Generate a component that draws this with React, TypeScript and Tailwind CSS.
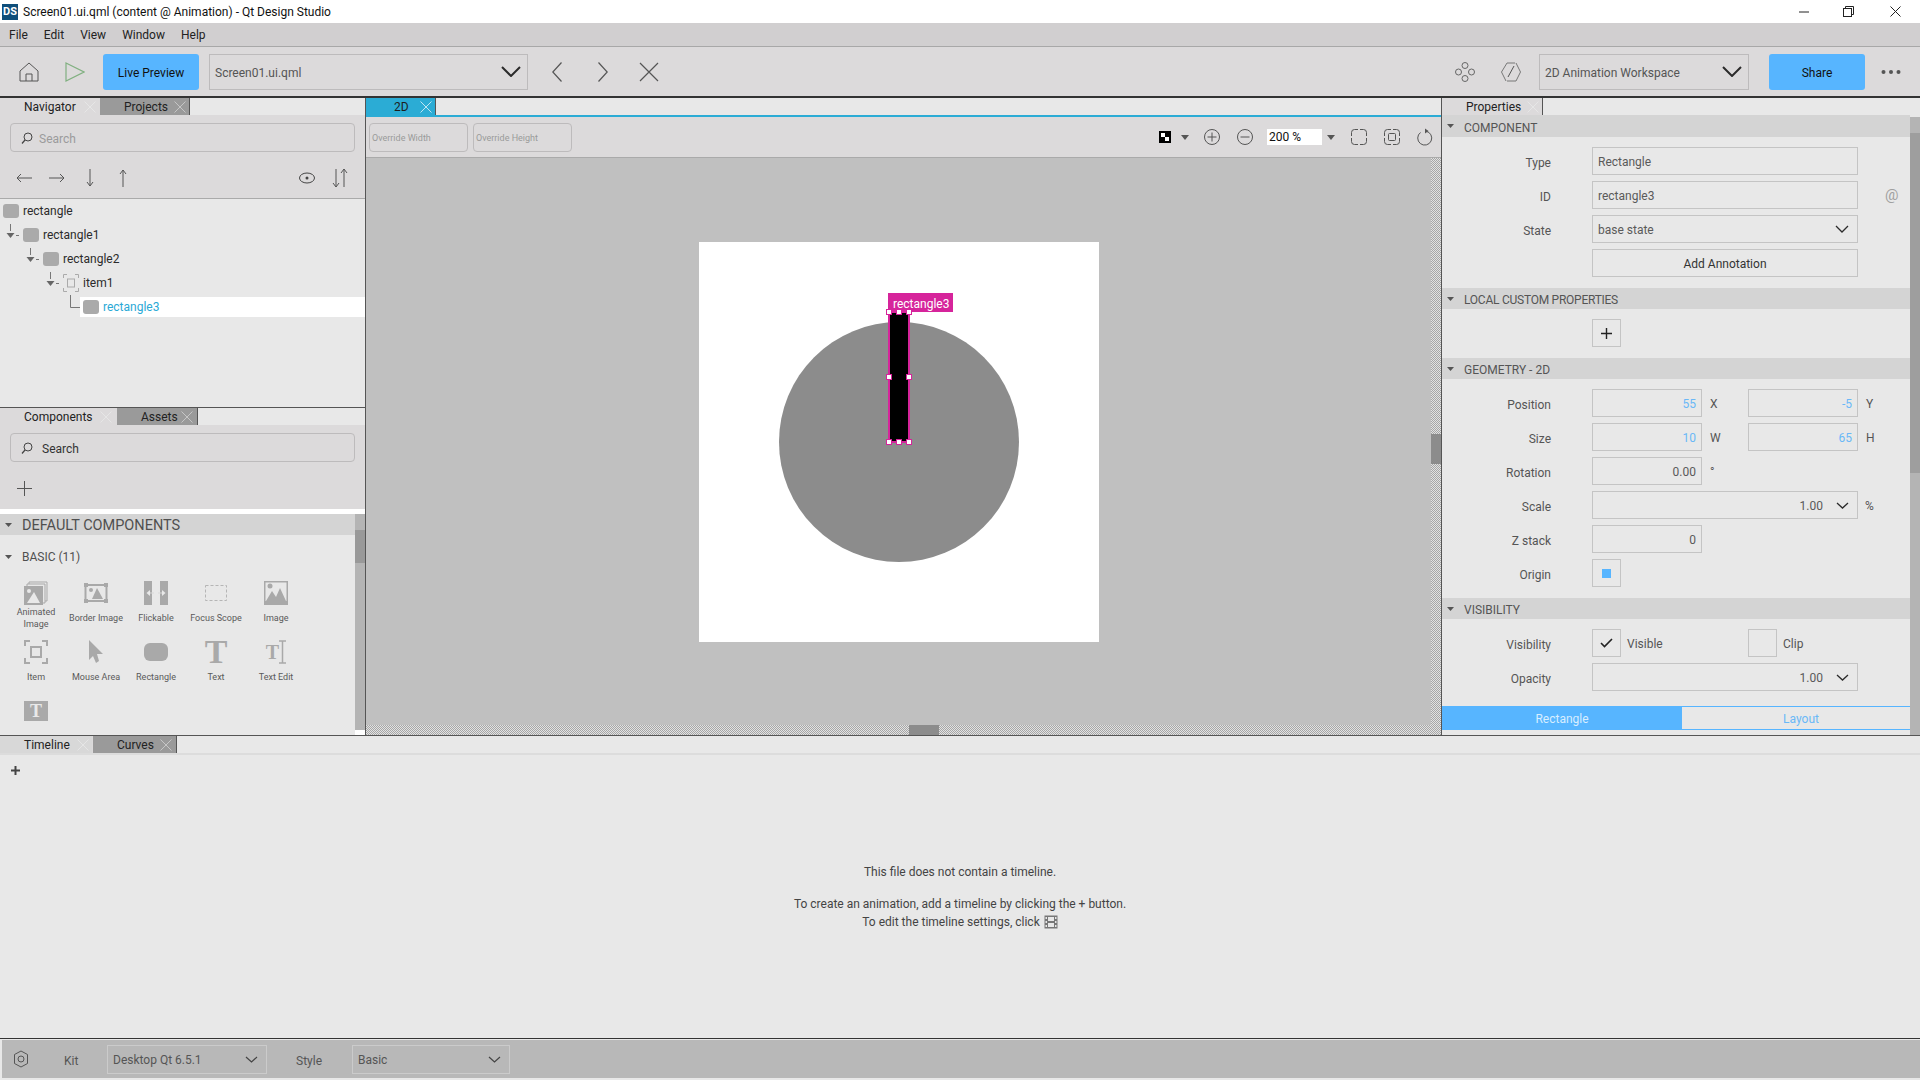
import React from "react";

const S = (p: React.SVGProps<SVGSVGElement> & { w: number; h: number }) => {
  const { w, h, children, ...rest } = p;
  return (
    <svg width={w} height={h} viewBox={`0 0 ${w} ${h}`} fill="none" className="shrink-0 block" {...rest}>
      {children}
    </svg>
  );
};

const TabX = ({ color = "#c9c9c9" }: { color?: string }) => (
  <S w={12} h={12}>
    <path d="M0.5 0.5L11.5 11.5M11.5 0.5L0.5 11.5" stroke={color} strokeWidth="0.8" />
  </S>
);

function Tab({ label, w, pl, xAt, active, bg }: { label: string; w: number; pl: number; xAt: number; active?: boolean; bg?: string }) {
  return (
    <div
      className={`relative h-full flex items-center shrink-0 text-[12px] text-[#222] border-r ${active ? "border-[#dcdadb]" : "border-[#555]"}`}
      style={{ width: w, paddingLeft: pl, background: bg ?? (active ? "#dcdadb" : "#9a9a9a") }}
    >
      <span>{label}</span>
      <span className="absolute top-[3px]" style={{ left: xAt - 6 }}>
        <TabX color={active ? "#e9e9e9" : "#d2d2d2"} />
      </span>
    </div>
  );
}

const SearchBox = ({ color, gap }: { color: string; gap: number }) => (
  <div className="mx-[10px] mt-[8px] h-[29px] rounded-[4px] border border-[#bdbbbc] flex items-center pl-[10px] text-[12px]" style={{ color }}>
    <S w={12} h={12}>
      <circle cx="7" cy="5" r="4" stroke="#444" strokeWidth="1" />
      <path d="M4 8L1 11.5" stroke="#444" strokeWidth="1.2" />
    </S>
    <span className="pt-[2px]" style={{ marginLeft: gap }}>Search</span>
  </div>
);

const Chevron = ({ w = 20, sw = 2, color = "#2b2b2b" }: { w?: number; sw?: number; color?: string }) => (
  <S w={w} h={Math.round(w * 0.55)}>
    <path d={`M1 1L${w / 2} ${Math.round(w * 0.55) - 1}L${w - 1} 1`} stroke={color} strokeWidth={sw} />
  </S>
);

const Caret = ({ color = "#555", w = 7, h = 4 }: { color?: string; w?: number; h?: number }) => (
  <S w={w} h={h}>
    <path d={`M0 0H${w}L${w / 2} ${h}Z`} fill={color} />
  </S>
);

function TreeConnector({ last }: { last?: boolean }) {
  return last ? (
    <S w={17} h={24}>
      <path d="M7.5 0V12.5H17" stroke="#777" strokeWidth="1" />
    </S>
  ) : (
    <S w={20} h={24}>
      <path d="M7.5 1V8" stroke="#777" strokeWidth="1" />
      <path d="M3.5 10H11.5L7.5 15Z" fill="#666" />
      <path d="M13 12.5H16" stroke="#777" strokeWidth="1" />
    </S>
  );
}

const RectIcon = () => <div className="w-[16px] h-[14px] rounded-[3px] bg-[#aaaaaa] shrink-0" />;
const ItemIcon = () => (
  <S w={16} h={18}>
    <path d="M0.5 4V0.5H4M12 0.5H15.5V4M15.5 14V17.5H12M4 17.5H0.5V14" stroke="#aaa" />
    <rect x="4.5" y="5" width="7" height="8" stroke="#aaa" />
  </S>
);

function TreeRow({ indent, label, item }: { indent: number; label: string; item?: boolean }) {
  return (
    <div className="h-[24px] flex items-center text-[12px] text-[#2b2b2b]" style={{ paddingLeft: indent + 3 }}>
      {indent >= 0 && label !== "rectangle" && <TreeConnector />}
      {item ? <ItemIcon /> : <RectIcon />}
      <span className="ml-[4px]">{label}</span>
    </div>
  );
}

const G = "#a9a9a9";
const compIcons: Record<string, React.ReactNode> = {
  anim: (
    <S w={24} h={24}>
      <path d="M5 3V1H23V20H21" stroke={G} strokeWidth="1" />
      <path d="M3 5V3H21V22H19" stroke={G} strokeWidth="1" />
      <rect x="0" y="5" width="19" height="19" fill={G} />
      <path d="M3 22L10 11L16 22Z" fill="#e9e9e9" />
      <circle cx="5" cy="10" r="2" fill="#e9e9e9" />
    </S>
  ),
  border: (
    <S w={24} h={20}>
      <rect x="1.5" y="2" width="21" height="16" stroke={G} strokeWidth="2" />
      <rect x="0" y="0" width="4" height="4" fill={G} />
      <rect x="20" y="0" width="4" height="4" fill={G} />
      <rect x="0" y="16" width="4" height="4" fill={G} />
      <rect x="20" y="16" width="4" height="4" fill={G} />
      <path d="M8 16L13 5L19 16Z" fill={G} />
      <circle cx="7" cy="7" r="2" fill={G} />
    </S>
  ),
  flick: (
    <S w={24} h={24}>
      <rect x="0" y="0" width="8" height="24" fill={G} />
      <rect x="16" y="0" width="8" height="24" fill={G} />
      <path d="M2.5 12L6 9V15Z" fill="#e9e9e9" />
      <path d="M21.5 12L18 9V15Z" fill="#e9e9e9" />
      <path d="M6 12H10M14 12H18" stroke="#d8d8d8" />
    </S>
  ),
  focus: (
    <S w={24} h={18}>
      <rect x="1.5" y="1.5" width="21" height="15" stroke="#b5b5b5" strokeDasharray="3 2" />
    </S>
  ),
  image: (
    <S w={24} h={24}>
      <rect x="0.5" y="0.5" width="23" height="23" stroke={G} />
      <rect x="1" y="1" width="22" height="22" stroke={G} />
      <path d="M2 20L8 10L12 16L16 7L22 20Z" fill={G} />
      <circle cx="6" cy="5" r="2.5" fill={G} />
      <rect x="0" y="20" width="24" height="4" fill={G} />
    </S>
  ),
  item: (
    <S w={24} h={24}>
      <path d="M1 6V1H6M18 1H23V6M23 18V23H18M6 23H1V18" stroke={G} strokeWidth="2" />
      <rect x="7" y="7" width="10" height="10" stroke={G} strokeWidth="2" />
    </S>
  ),
  mouse: (
    <S w={16} h={24}>
      <path d="M1 0L15 14H9L11 21L8 23L5 16L1 20Z" fill={G} />
    </S>
  ),
  rect: <div className="w-[24px] h-[18px] rounded-[6px] bg-[#a9a9a9]" />,
  text: <span className="text-[34px] leading-[24px] font-bold text-[#a9a9a9] font-['Liberation_Serif',serif]">T</span>,
  textedit: (
    <div className="flex items-center">
      <span className="text-[20px] leading-[24px] font-bold text-[#a9a9a9] font-['Liberation_Serif',serif]">T</span>
      <S w={7} h={24}>
        <path d="M0 1H7M0 23H7M3.5 1V23" stroke={G} strokeWidth="1.5" />
      </S>
    </div>
  ),
  box: (
    <div className="w-[24px] h-[20px] bg-[#a9a9a9] flex items-center justify-center">
      <span className="text-[18px] leading-[20px] font-bold text-[#e9e9e9] font-['Liberation_Serif',serif]">T</span>
    </div>
  ),
};

const comps: [string, string][] = [
  ["anim", "Animated Image"],
  ["border", "Border Image"],
  ["flick", "Flickable"],
  ["focus", "Focus Scope"],
  ["image", "Image"],
  ["item", "Item"],
  ["mouse", "Mouse Area"],
  ["rect", "Rectangle"],
  ["text", "Text"],
  ["textedit", "Text Edit"],
  ["box", ""],
];

function LeftPanel() {
  return (
    <div className="w-[365px] shrink-0 flex flex-col border-r border-[#555] box-content">
      <div className="h-[17px] flex bg-[#e8e8e8]">
        <Tab label="Navigator" w={100} pl={24} xAt={90} active />
        <Tab label="Projects" w={90} pl={24} xAt={80} />
      </div>
      <div className="h-[83px] bg-[#dcdadb] border-b border-[#aaa] box-content">
        <SearchBox color="#9b9b9b" gap={6} />
        <div className="flex items-center h-[52px] text-[#555]">
          <S w={16} h={10} style={{ marginLeft: 16 }}>
            <path d="M16 5H1M5 1L1 5L5 9" stroke="#555" />
          </S>
          <S w={16} h={10} style={{ marginLeft: 17 }}>
            <path d="M0 5H15M11 1L15 5L11 9" stroke="#555" />
          </S>
          <S w={10} h={18} style={{ marginLeft: 20 }}>
            <path d="M5 0V17M2 13L5 17L8 13" stroke="#555" />
          </S>
          <S w={10} h={18} style={{ marginLeft: 23 }}>
            <path d="M5 18V1M2 5L5 1L8 5" stroke="#555" />
          </S>
          <S w={16} h={12} style={{ marginLeft: 171 }}>
            <ellipse cx="8" cy="6" rx="7.5" ry="5" stroke="#444" />
            <circle cx="8" cy="6" r="1.5" fill="#444" />
          </S>
          <S w={16} h={20} style={{ marginLeft: 17 }}>
            <path d="M4 1V19M1 15L4 19L7 15M12 19V1M9 5L12 1L15 5" stroke="#555" />
          </S>
        </div>
      </div>
      <div className="h-[208px] bg-[#e8e8e8] border-b border-[#555] box-content">
        <TreeRow indent={0} label="rectangle" />
        <TreeRow indent={0} label="rectangle1" />
        <TreeRow indent={20} label="rectangle2" />
        <TreeRow indent={40} label="item1" item />
        <div className="h-[24px] flex items-center text-[12px]" style={{ paddingLeft: 63 }}>
          <TreeConnector last />
          <div className="flex-1 h-[20px] bg-white flex items-center pl-[3px] text-[#2aa9d6]">
            <RectIcon />
            <span className="ml-[4px]">rectangle3</span>
          </div>
        </div>
      </div>
      <div className="h-[17px] flex bg-[#e8e8e8]">
        <Tab label="Components" w={117} pl={24} xAt={106} active />
        <Tab label="Assets" w={81} pl={24} xAt={70} />
      </div>
      <div className="h-[84px] bg-[#dcdadb]">
        <SearchBox color="#333" gap={9} />
        <div className="pl-[17px] pt-[19px]">
          <S w={15} h={15}>
            <path d="M7.5 0V15M0 7.5H15" stroke="#555" />
          </S>
        </div>
      </div>
      <div className="flex-1 flex min-h-0 mt-[5px] overflow-hidden">
        <div className="flex-1 flex flex-col min-w-0">
          <div className="h-[21px] bg-[#d4d4d4] flex items-center text-[14.5px] text-[#4f4f4f] pl-[5px]">
            <Caret />
            <span className="ml-[10px] pt-[3px]">DEFAULT COMPONENTS</span>
          </div>
          <div className="flex-1 bg-[#e8e8e8]">
            <div className="h-[25px] mt-[9px] flex items-center text-[12px] text-[#4f4f4f] pl-[5px]">
              <Caret />
              <span className="ml-[10px]">BASIC (11)</span>
            </div>
            <div className="grid grid-cols-[60px_60px_60px_60px_60px] auto-rows-[59px] ml-[6px] mt-[12px]">
              {comps.map(([k, l]) => (
                <div key={k} className="flex flex-col items-center">
                  <div className="h-[24px] flex items-center justify-center">{compIcons[k]}</div>
                  <div className="h-[24px] pt-[2px] flex items-center text-center text-[9px] leading-[12px] text-[#5a5a5a]">{l}</div>
                </div>
              ))}
            </div>
          </div>
        </div>
        <div className="w-[10px] flex flex-col mb-[5px]">
          <div className="h-[16px] bg-[#b4b4b4]" />
          <div className="h-[33px] bg-[#999]" />
          <div className="flex-1 bg-[#b4b4b4]" />
        </div>
      </div>
    </div>
  );
}

const Dither = "bg-[repeating-conic-gradient(#a6a6a6_0_25%,#e2e2e2_0_50%)] bg-[length:2px_2px]";

function Canvas() {
  return (
    <div className="flex-1 relative bg-[#c0c0c0] overflow-hidden">
      <div className="absolute left-[333px] top-[84px] w-[400px] h-[400px] bg-white" />
      <div className="absolute left-[413px] top-[164px] w-[240px] h-[240px] rounded-full bg-[#8c8c8c]" />
      <div className="absolute left-[522px] top-[153px] w-[22px] h-[132px] bg-black border-2 border-[#d6249b]" />
      <div className="absolute left-[522px] top-[135px] w-[65px] h-[19px] bg-[#d6249b] text-white text-[12px] leading-[22px] pl-[5px]">rectangle3</div>
      {[
        [520, 151], [530, 151], [540, 151],
        [520, 216], [540, 216],
        [520, 281], [530, 281], [540, 281],
      ].map(([x, y]) => (
        <div key={`${x}-${y}`} className="absolute w-[6px] h-[6px] bg-white border border-[#d6249b]" style={{ left: x, top: y }} />
      ))}
      <div className={`absolute right-0 top-0 bottom-0 w-[10px] ${Dither}`}>
        <div className="absolute left-0 top-[276px] w-[10px] h-[30px] bg-[#8c8c8c]" />
      </div>
      <div className={`absolute left-0 right-0 bottom-0 h-[10px] ${Dither}`}>
        <div className="absolute left-[543px] top-0 w-[30px] h-[10px] bg-[#8c8c8c]" />
      </div>
    </div>
  );
}

const FRAME = "M.5 7V3.5A3 3 0 0 1 3.5 .5H7M9 .5H12.5A3 3 0 0 1 15.5 3.5V7M15.5 9V12.5A3 3 0 0 1 12.5 15.5H9M7 15.5H3.5A3 3 0 0 1 .5 12.5V9";

function CenterPanel() {
  const line = { stroke: "#555", strokeWidth: 1 };
  return (
    <div className="flex-1 flex flex-col min-w-0">
      <div className="h-[17px] flex bg-[#e8e8e8]">
        <div className="relative w-[70px] bg-[#2bacd5] flex items-center pl-[28px] text-[12px] text-[#1d1d1d] border-r border-[#555]">
          2D
          <span className="absolute left-[54px] top-[3px]">
            <TabX color="#e5f5fb" />
          </span>
        </div>
      </div>
      <div className="h-[2px] bg-[#2bacd5]" />
      <div className="h-[40px] bg-[#dcdadb] border-b border-[#aaa] box-content flex items-center pl-[3px]">
        {["Override Width", "Override Height"].map((t, i) => (
          <div key={t} className={`w-[99px] h-[29px] rounded-[4px] border border-[#bdbbbc] flex items-center pl-[2px] pt-[3px] text-[9px] text-[#9a9a9a] ${i ? "ml-[5px]" : ""}`}>
            {t}
          </div>
        ))}
        <div className="ml-auto flex items-center pr-[7px]">
          <div className="w-[12px] h-[12px] bg-black relative">
            <div className="absolute left-[2px] top-[2px] w-[4px] h-[4px] bg-white" />
            <div className="absolute left-[6px] top-[6px] w-[4px] h-[4px] bg-white" />
          </div>
          <div className="ml-[10px]"><Caret w={8} h={5} /></div>
          <S w={18} h={18} style={{ marginLeft: 14 }}>
            <circle cx="9" cy="9" r="7.5" {...line} />
            <path d="M4.5 9H13.5M9 4.5V13.5" {...line} />
          </S>
          <S w={18} h={18} style={{ marginLeft: 15 }}>
            <circle cx="9" cy="9" r="7.5" {...line} />
            <path d="M4.5 9H13.5" {...line} />
          </S>
          <div className="ml-[13px] w-[55px] h-[16px] bg-white text-[12px] leading-[16px] text-[#111] pl-[2px]">200 %</div>
          <div className="ml-[5px]"><Caret w={8} h={5} /></div>
          <S w={16} h={16} style={{ marginLeft: 16 }}>
            <path d={FRAME} {...line} />
          </S>
          <S w={16} h={16} style={{ marginLeft: 17 }}>
            <path d={FRAME} {...line} />
            <rect x="4.5" y="4.5" width="7" height="7" rx="1" {...line} />
          </S>
          <S w={18} h={18} style={{ marginLeft: 16 }}>
            <path d="M10 3.2A7 7 0 1 1 4.5 4.5" {...line} />
            <path d="M9 0.5L12.5 3L9 5.5Z" fill="#555" />
          </S>
        </div>
      </div>
      <Canvas />
    </div>
  );
}

function Field({ w, children, right, color }: { w: number; children?: React.ReactNode; right?: boolean; color?: string }) {
  return (
    <div
      className={`h-[28px] border border-[#c4c4c4] flex items-center shrink-0 text-[12px] px-[5px] ${right ? "justify-end" : ""}`}
      style={{ width: w, color: color ?? "#5a5a5a" }}
    >
      {children}
    </div>
  );
}

function Row({ label, children }: { label?: string; children: React.ReactNode }) {
  return (
    <div className="h-[28px] flex items-center text-[12px] text-[#555]">
      <div className="w-[109px] text-right shrink-0 pt-[3px]">{label}</div>
      <div className="ml-[41px] flex items-center">{children}</div>
    </div>
  );
}

const Head = ({ t, h = 21, tight, pt = 2 }: { t: string; h?: number; tight?: boolean; pt?: number }) => (
  <div className="bg-[#d4d4d4] flex items-center text-[12px] text-[#555] pl-[5px] shrink-0" style={{ height: h }}>
    <Caret />
    <span className={`ml-[10px] ${tight ? "tracking-[-0.25px]" : ""}`} style={{ paddingTop: pt }}>{t}</span>
  </div>
);

const Suffix = ({ t }: { t: string }) => <span className="w-[46px] pl-[8px] pt-[2px] text-[12px] text-[#555]">{t}</span>;
const Body = ({ children }: { children: React.ReactNode }) => <div className="flex flex-col gap-[6px] pt-[10px] pb-[11px]">{children}</div>;
const Tx = ({ children, grow }: { children: React.ReactNode; grow?: boolean }) => <span className={`pt-[2px] ${grow ? "flex-1" : ""}`}>{children}</span>;

function RightPanel() {
  const blue = "#6ab8f7";
  return (
    <div className="w-[478px] shrink-0 flex flex-col border-l border-[#555] box-content">
      <div className="h-[17px] flex bg-[#e8e8e8]">
        <div className="border-r border-[#555] bg-[#dcdadb] w-[101px] h-full relative flex items-center pl-[24px] text-[12px] text-[#222]">
          Properties
          <span className="absolute left-[85px] top-[3px]"><TabX color="#e9e9e9" /></span>
        </div>
      </div>
      <div className="flex-1 flex min-h-0 bg-[#e8e8e8]">
        <div className="flex-1 flex flex-col min-w-0">
          <Head t="COMPONENT" h={22} pt={3} />
          <Body>
            <Row label="Type"><Field w={266}><Tx>Rectangle</Tx></Field></Row>
            <Row label="ID">
              <Field w={266}><Tx>rectangle3</Tx></Field>
              <span className="ml-[27px] text-[15px] text-[#a0a0a0]">@</span>
            </Row>
            <Row label="State">
              <Field w={266}>
                <Tx grow>base state</Tx>
                <span className="mr-[3px]"><Chevron w={14} sw={1.3} /></span>
              </Field>
            </Row>
            <Row>
              <div className="w-[266px] h-[28px] pt-[2px] border border-[#c4c4c4] flex items-center justify-center text-[12px] text-[#333]">Add Annotation</div>
            </Row>
          </Body>
          <Head t="LOCAL CUSTOM PROPERTIES" tight />
          <Body>
            <Row>
              <div className="w-[29px] h-[28px] border border-[#c4c4c4] flex items-center justify-center">
                <S w={11} h={11}><path d="M5.5 0V11M0 5.5H11" stroke="#222" strokeWidth="1.4" /></S>
              </div>
            </Row>
          </Body>
          <Head t="GEOMETRY - 2D" />
          <Body>
            <Row label="Position">
              <Field w={110} right color={blue}><Tx>55</Tx></Field><Suffix t="X" />
              <Field w={110} right color={blue}><Tx>-5</Tx></Field><Suffix t="Y" />
            </Row>
            <Row label="Size">
              <Field w={110} right color={blue}><Tx>10</Tx></Field><Suffix t="W" />
              <Field w={110} right color={blue}><Tx>65</Tx></Field><Suffix t="H" />
            </Row>
            <Row label="Rotation">
              <Field w={110} right><Tx>0.00</Tx></Field><Suffix t="°" />
            </Row>
            <Row label="Scale">
              <Field w={266} right>
                <Tx>1.00</Tx>
                <span className="ml-[13px] mr-[3px]"><Chevron w={13} sw={1.3} /></span>
              </Field>
              <span className="pl-[7px] pt-[2px] text-[12px]">%</span>
            </Row>
            <Row label="Z stack"><Field w={110} right><Tx>0</Tx></Field></Row>
            <Row label="Origin">
              <div className="w-[29px] h-[28px] border border-[#c4c4c4] flex items-center justify-center">
                <div className="w-[9px] h-[9px] bg-[#57b5ff]" />
              </div>
            </Row>
          </Body>
          <Head t="VISIBILITY" />
          <Body>
            <Row label="Visibility">
              <div className="w-[29px] h-[28px] border border-[#c4c4c4] flex items-center justify-center">
                <S w={13} h={10}><path d="M1 5L4.5 8.5L12 1" stroke="#222" strokeWidth="1.6" /></S>
              </div>
              <span className="w-[127px] pl-[6px] pt-[2px]">Visible</span>
              <div className="w-[29px] h-[28px] border border-[#c4c4c4]" />
              <span className="pl-[6px] pt-[2px]">Clip</span>
            </Row>
            <Row label="Opacity">
              <Field w={266} right>
                <Tx>1.00</Tx>
                <span className="ml-[13px] mr-[3px]"><Chevron w={13} sw={1.3} /></span>
              </Field>
            </Row>
          </Body>
          <div className="mt-[4px] h-[24px] flex text-[12px]">
            <div className="w-[240px] pt-[2px] bg-[#57b5ff] text-[#d8eeff] flex items-center justify-center">Rectangle</div>
            <div className="flex-1 pt-[2px] border-y border-[#57b5ff] text-[#6ab8f7] flex items-center justify-center pl-[10px]">Layout</div>
          </div>
        </div>
        <div className="w-[10px] flex flex-col mt-[2px]">
          <div className="h-[16px] bg-[#b4b4b4]" />
          <div className="h-[340px] bg-[#9e9e9e]" />
          <div className="flex-1 bg-[#b4b4b4]" />
        </div>
      </div>
    </div>
  );
}

function Combo({ w, t }: { w: number; t: string }) {
  return (
    <div className="h-[36px] border border-[#bdbbbc] flex items-center pl-[5px] pr-[6px] text-[12px] text-[#555] shrink-0" style={{ width: w }}>
      <span className="flex-1 pt-[2px]">{t}</span>
      <Chevron w={20} sw={2} />
    </div>
  );
}

function Toolbar() {
  return (
    <div className="h-[49px] bg-[#dcdadb] flex items-center shrink-0">
      <S w={20} h={20} style={{ marginLeft: 19 }}>
        <path d="M1 9L10 1L19 9V19H1Z" stroke="#555" />
        <path d="M7 19V12H13V19" stroke="#555" />
      </S>
      <S w={20} h={20} style={{ marginLeft: 26 }}>
        <path d="M1 1L19 10L1 19Z" stroke="#80b080" strokeWidth="1.2" />
      </S>
      <div className="ml-[18px] w-[96px] h-[36px] pt-[2px] rounded-[3px] bg-[#57b5ff] flex items-center justify-center text-[12px] text-[#111]">Live Preview</div>
      <div className="ml-[10px]"><Combo w={319} t="Screen01.ui.qml" /></div>
      <S w={10} h={20} style={{ marginLeft: 24 }}>
        <path d="M9.5 0.5L0.8 10L9.5 19.5" stroke="#555" strokeWidth="1.2" />
      </S>
      <S w={10} h={20} style={{ marginLeft: 36 }}>
        <path d="M0.5 0.5L9.2 10L0.5 19.5" stroke="#555" strokeWidth="1.2" />
      </S>
      <S w={20} h={20} style={{ marginLeft: 31 }}>
        <path d="M1 1L19 19M19 1L1 19" stroke="#555" strokeWidth="1.2" />
      </S>
      <div className="ml-auto flex items-center pr-[19px]">
        <S w={20} h={20}>
          <g stroke="#666">
            <circle cx="10" cy="3.5" r="3" />
            <circle cx="10" cy="16.5" r="3" />
            <circle cx="3.5" cy="10" r="3" />
            <circle cx="16.5" cy="10" r="3" />
          </g>
        </S>
        <S w={20} h={20} style={{ marginLeft: 26 }}>
          <path d="M6 1H14M19.5 10L15 19H6M.5 10L6 1M.5 10L5 19M15 1L19.5 10" stroke="#777" />
          <path d="M13 4L7 15" stroke="#555" />
        </S>
        <div className="ml-[18px]"><Combo w={210} t="2D Animation Workspace" /></div>
        <div className="ml-[20px] w-[96px] h-[36px] pt-[2px] rounded-[3px] bg-[#57b5ff] flex items-center justify-center text-[12px] text-[#111]">Share</div>
        <S w={20} h={6} style={{ marginLeft: 16 }}>
          <circle cx="2.5" cy="3" r="2" fill="#555" />
          <circle cx="10" cy="3" r="2" fill="#555" />
          <circle cx="17.5" cy="3" r="2" fill="#555" />
        </S>
      </div>
    </div>
  );
}

function Timeline() {
  return (
    <div className="flex-1 flex flex-col min-h-0 bg-[#e8e8e8]">
      <div className="h-[17px] flex shrink-0">
        <Tab label="Timeline" w={93} pl={24} xAt={83} bg="#d8d8d8" active />
        <Tab label="Curves" w={84} pl={24} xAt={73} />
      </div>
      <div className="h-[2px] bg-[#dcdcdc] shrink-0" />
      <div className="pl-[11px] pt-[11px] shrink-0">
        <S w={9} h={9}><path d="M4.5 0V9M0 4.5H9" stroke="#444" strokeWidth="2" /></S>
      </div>
      <div className="flex-1 flex flex-col items-center justify-center text-[12px] leading-[18px] text-[#444] pb-[20px]">
        <div className="mb-[14px]">This file does not contain a timeline.</div>
        <div>To create an animation, add a timeline by clicking the + button.</div>
        <div className="flex items-center gap-[4px]">
          To edit the timeline settings, click
          <S w={14} h={14}>
            <rect x=".5" y=".5" width="13" height="13" fill="#777" />
            <rect x="4" y="2" width="6" height="4" fill="#e8e8e8" />
            <rect x="4" y="8" width="6" height="4" fill="#e8e8e8" />
            <rect x="1.5" y="2" width="1.5" height="2" fill="#e8e8e8" />
            <rect x="1.5" y="6" width="1.5" height="2" fill="#e8e8e8" />
            <rect x="1.5" y="10" width="1.5" height="2" fill="#e8e8e8" />
            <rect x="11" y="2" width="1.5" height="2" fill="#e8e8e8" />
            <rect x="11" y="6" width="1.5" height="2" fill="#e8e8e8" />
            <rect x="11" y="10" width="1.5" height="2" fill="#e8e8e8" />
          </S>
        </div>
      </div>
    </div>
  );
}

function Status() {
  const Sel = ({ w, t }: { w: number; t: string }) => (
    <div className="h-[29px] border border-[#cbcbcb] flex items-center pl-[5px] pr-[8px] shrink-0" style={{ width: w }}>
      <span className="flex-1 pt-[2px]">{t}</span>
      <Chevron w={13} sw={1.2} color="#444" />
    </div>
  );
  return (
    <div className="shrink-0 border-t border-[#333] bg-[#e8e8e8] pt-[1px] pb-[2px]">
      <div className="ml-[2px] h-[38px] bg-[#b8b8b8] flex items-center text-[12px] text-[#555]">
        <S w={18} h={18} style={{ marginLeft: 10 }}>
          <path d="M9 1L15.5 4.5V13.5L9 17L2.5 13.5V4.5Z" stroke="#555" strokeLinejoin="round" />
          <circle cx="9" cy="9" r="3" stroke="#555" />
        </S>
        <span className="ml-[34px] w-[15px] pt-[3px]">Kit</span>
        <div className="ml-[28px]"><Sel w={160} t="Desktop Qt 6.5.1" /></div>
        <span className="ml-[29px] w-[26px] pt-[3px]">Style</span>
        <div className="ml-[30px]"><Sel w={158} t="Basic" /></div>
      </div>
    </div>
  );
}

export default function App() {
  return (
    <div className="w-[1920px] h-[1080px] flex flex-col overflow-hidden bg-white font-['Roboto',sans-serif]">
      <div className="h-[23px] flex items-center bg-white shrink-0 text-[12px] text-[#111]">
        <div className="ml-[2px] w-[16px] h-[16px] bg-[#0f4e7a] text-white text-[11px] font-bold leading-[16px] text-center">DS</div>
        <span className="ml-[5px]">Screen01.ui.qml (content @ Animation) - Qt Design Studio</span>
        <div className="ml-auto flex items-center pr-[19px]">
          <S w={10} h={2}><path d="M0 1H10" stroke="#222" /></S>
          <S w={11} h={11} style={{ marginLeft: 34 }}>
            <rect x=".5" y="2.5" width="8" height="8" stroke="#222" />
            <path d="M2.5 2.5V.5H10.5V8.5H8.5" stroke="#222" />
          </S>
          <S w={11} h={11} style={{ marginLeft: 36 }}>
            <path d="M.5 .5L10.5 10.5M10.5 .5L.5 10.5" stroke="#222" />
          </S>
        </div>
      </div>
      <div className="h-[23px] bg-[#d1cfd0] border-b border-[#a8a8a8] box-content flex items-center gap-[16px] pl-[9px] text-[12px] text-[#222] shrink-0">
        <span>File</span>
        <span>Edit</span>
        <span>View</span>
        <span>Window</span>
        <span>Help</span>
      </div>
      <Toolbar />
      <div className="h-[2px] bg-[#333] shrink-0" />
      <div className="h-[637px] flex shrink-0 border-b border-[#555] box-content">
        <LeftPanel />
        <CenterPanel />
        <RightPanel />
      </div>
      <Timeline />
      <Status />
    </div>
  );
}
